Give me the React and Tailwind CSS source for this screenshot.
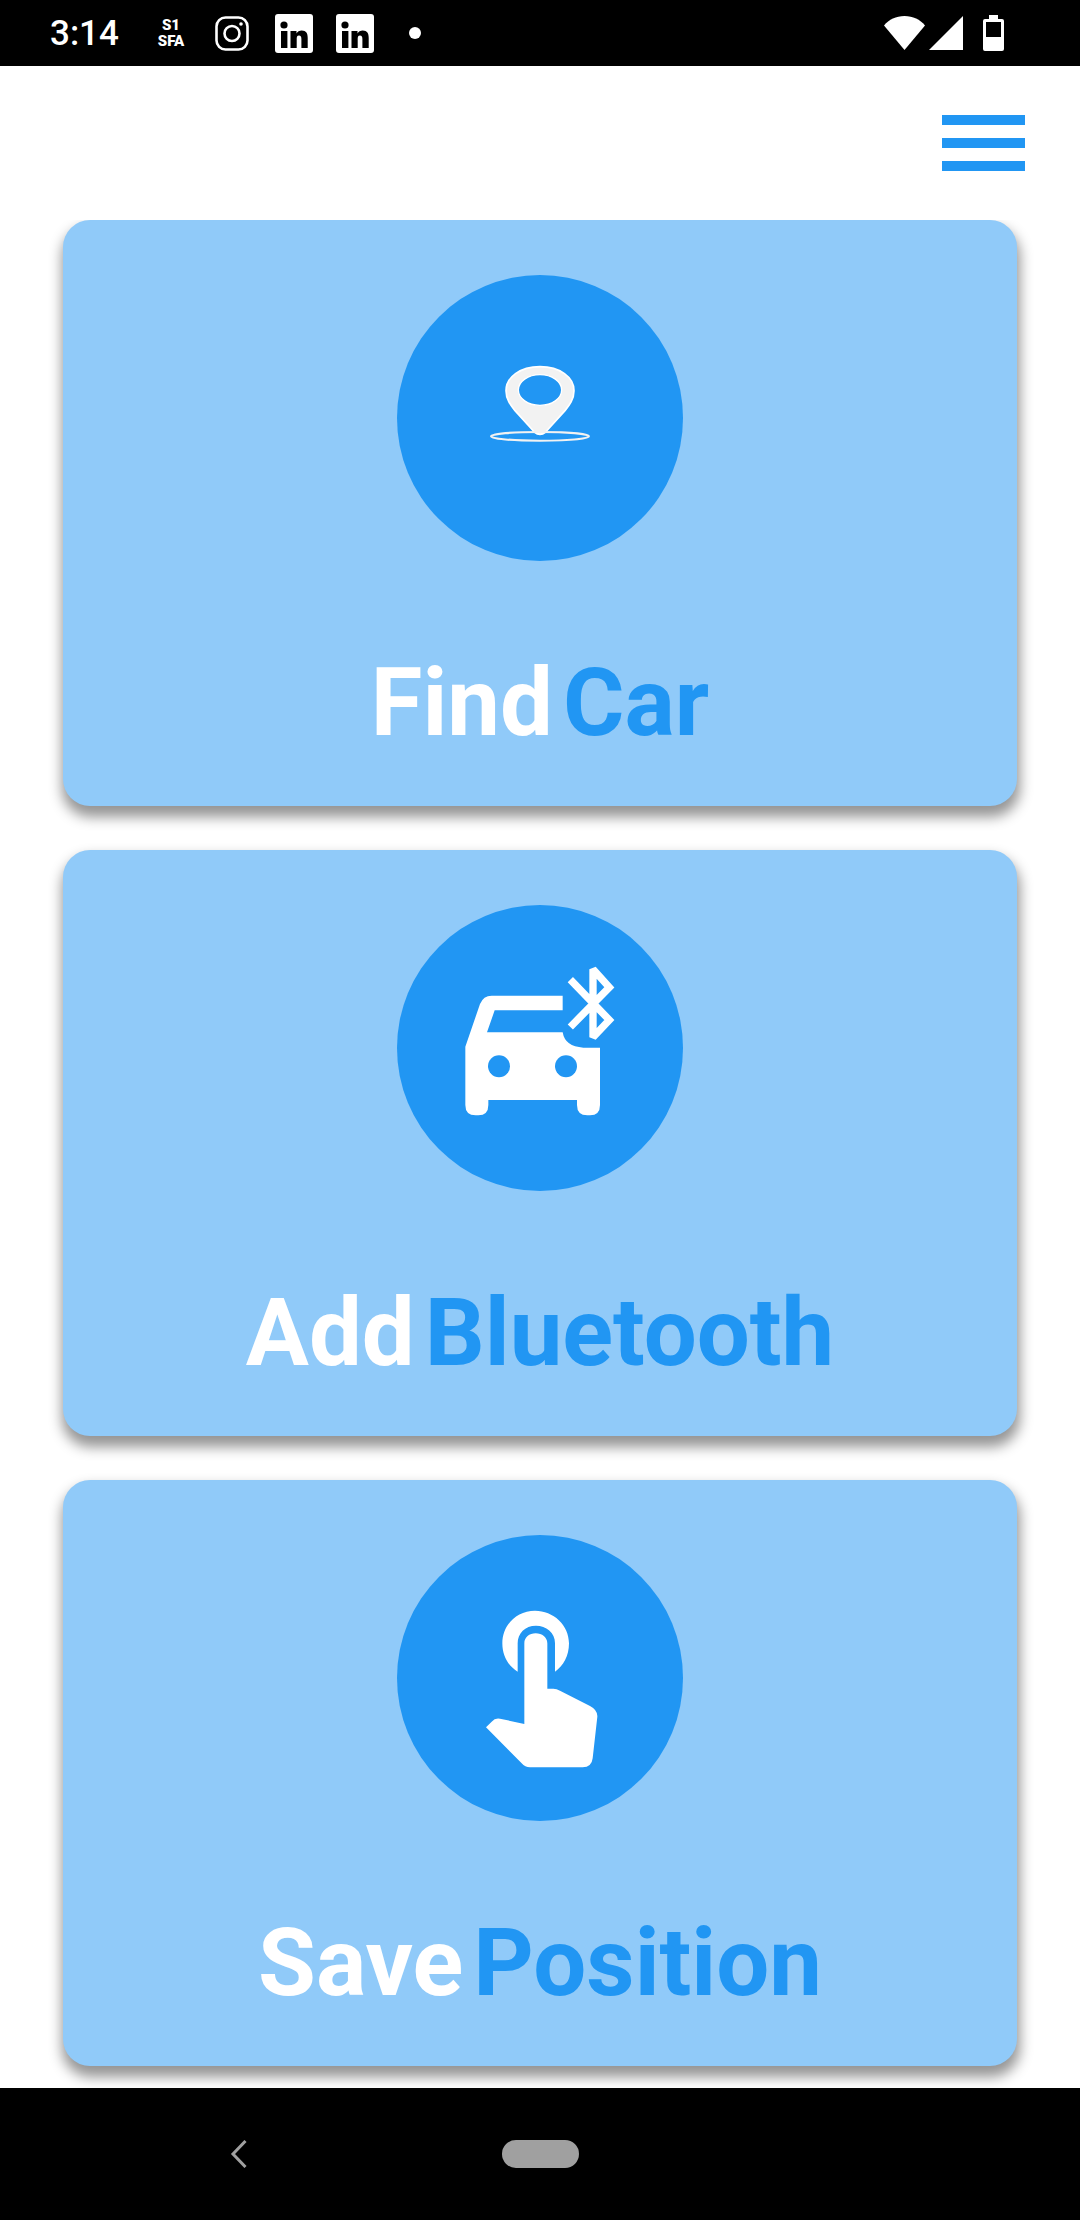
const BLUE = "#2196F3";

function Linkedin() {
  return (
    <svg viewBox="0 0 38 39" className="w-[38px] h-[39px]">
      <rect width="38" height="39" rx="3" fill="#fff" />
      <circle cx="9" cy="11" r="3.6" fill="#000" />
      <rect x="6" y="17" width="6.4" height="17" fill="#000" />
      <path d="M15.5 17h6v2.4c1-1.7 2.9-2.9 5.2-2.9 4.6 0 6 2.9 6 7.400V34h-6.300v-9c0-2.300-.6-3.500-2.400-3.500-2 0-2.300 1.600-2.300 3.500v9h-6.200z" fill="#000" />
    </svg>
  );
}

function StatusBar() {
  return (
    <div className="h-[66px] bg-black flex items-center pl-[50px] pr-[76px] text-white">
      <span className="text-[35px] leading-none font-medium w-[107px]">3:14</span>
      <div className="flex flex-col items-center w-[28px] font-black text-[15px] leading-[16px]">
        <span>S1</span>
        <span>SFA</span>
      </div>
      <svg viewBox="0 0 34 35" className="w-[34px] h-[35px] ml-[30px]" fill="none" stroke="#fff">
        <rect x="1.500" y="1.500" width="31" height="32" rx="9" strokeWidth="2.600" />
        <circle cx="17" cy="17.500" r="7.500" strokeWidth="2.600" />
        <circle cx="26" cy="8" r="1.800" fill="#fff" stroke="none" />
      </svg>
      <div className="ml-[26px]"><Linkedin /></div>
      <div className="ml-[23px]"><Linkedin /></div>
      <div className="w-3 h-3 rounded-full bg-white ml-[35px]" />
      <div className="flex-1" />
      <svg viewBox="0 0 41 34" className="w-[41px] h-[34px]">
        <path d="M0 9.500C5 3.500 12 0 20.500 0S36 3.500 41 9.500L20.500 34z" fill="#fff" />
      </svg>
      <svg viewBox="0 0 34 34" className="w-[34px] h-[34px] ml-[4px]">
        <path d="M34 0V34H0z" fill="#fff" />
      </svg>
      <svg viewBox="0 0 21 36" className="w-[21px] h-[36px] ml-[20px]">
        <path d="M6 0h9v4h4a2 2 0 0 1 2 2v28a2 2 0 0 1-2 2H2a2 2 0 0 1-2-2V6a2 2 0 0 1 2-2h4z" fill="#fff" />
        <rect x="3" y="7" width="15" height="15" fill="#000" />
      </svg>
    </div>
  );
}

function PinIcon() {
  return (
    <svg viewBox="51 45 858 858" className="w-[286px] h-[286px]">
      <path
        d="M480 320C540 320 582 352 582 392C582 418 568 436 555 452L497 516Q480 530 463 516L405 452C392 436 378 418 378 392C378 352 420 320 480 320Z"
        fill="#f2f2f2"
        stroke="#fff"
        strokeWidth="5"
      />
      <ellipse cx="480" cy="390" rx="65" ry="46" fill={BLUE} stroke="#fff" strokeWidth="4" />
      <ellipse cx="480" cy="529" rx="147" ry="13" fill="none" stroke="#f2f2f2" strokeWidth="6" />
    </svg>
  );
}

function CarBluetoothIcon() {
  return (
    <svg viewBox="-69 -75 858 858" className="w-[286px] h-[286px]">
      <path
        d="M428 197H215Q190 197 180 222L136 350V525Q136 556 167 556H175Q205 556 205 525V510H471V525Q471 556 502 556H510Q540 556 540 525V353H490Q435 350 428 307H201L224 241H428Z"
        fill="#fff"
      />
      <circle cx="237" cy="409" r="33" fill={BLUE} />
      <circle cx="438" cy="409" r="33" fill={BLUE} />
      <path d="M451 291L568 172L519 118V322L568 270L451 149" fill="none" stroke="#fff" strokeWidth="22" strokeMiterlimit="2" />
    </svg>
  );
}

function TapIcon() {
  return (
    <svg viewBox="-129 -135 858 858" className="w-[286px] h-[286px]" fill="#fff">
      <path d="M233 275C205 258 187 228 187 190C187 135 230 92 285 92C340 92 387 135 387 190C387 228 370 258 345 275V190C345 157 318 137 288 137C255 137 233 160 233 190Z" />
      <path d="M253 190C253 172 268 160 287 160C306 160 322 172 322 190V326H340Q350 326 360 332L450 378Q473 390 472 410L458 535Q455 562 428 562H270Q255 562 245 550L138 442L155 425Q165 413 180 416L253 432Z" />
    </svg>
  );
}

function Card({ icon, first, second }) {
  return (
    <div className="h-[586px] rounded-[27px] bg-[#90CAF9] shadow-[1px_9px_13px_2px_rgba(0,0,0,0.42)] flex flex-col items-center pt-[55px]">
      <div className="w-[286px] h-[286px] rounded-full bg-[#2196F3] shrink-0">{icon}</div>
      <div className="mt-[87px] flex gap-[10px] text-[94px] leading-[110px] font-bold">
        <span className="text-white">{first}</span>
        <span className="text-[#2196F3]">{second}</span>
      </div>
    </div>
  );
}

export default function App() {
  return (
    <div className="w-[1080px] h-[2220px] bg-white flex flex-col overflow-hidden font-['Roboto',sans-serif]">
      <StatusBar />
      <div className="h-[154px] flex flex-col gap-[13px] items-end pt-[49px] pr-[55px] shrink-0">
        <div className="w-[83px] h-[10px] bg-[#2196F3]" />
        <div className="w-[83px] h-[10px] bg-[#2196F3]" />
        <div className="w-[83px] h-[10px] bg-[#2196F3]" />
      </div>
      <div className="h-[1868px] flex flex-col gap-[44px] px-[63px] shrink-0 overflow-hidden">
        <Card icon={<PinIcon />} first="Find" second="Car" />
        <Card icon={<CarBluetoothIcon />} first="Add" second="Bluetooth" />
        <Card icon={<TapIcon />} first="Save" second="Position" />
      </div>
      <div className="h-[132px] bg-black flex items-center shrink-0 relative">
        <svg viewBox="0 0 17 28" className="w-[17px] h-[28px] ml-[230px]" fill="none" stroke="#a0a0a0" strokeWidth="3">
          <path d="M15.500 1L3 14L15.500 27" />
        </svg>
        <div className="w-[77px] h-[28px] rounded-full bg-[#a0a0a0] ml-[255px]" />
      </div>
    </div>
  );
}
